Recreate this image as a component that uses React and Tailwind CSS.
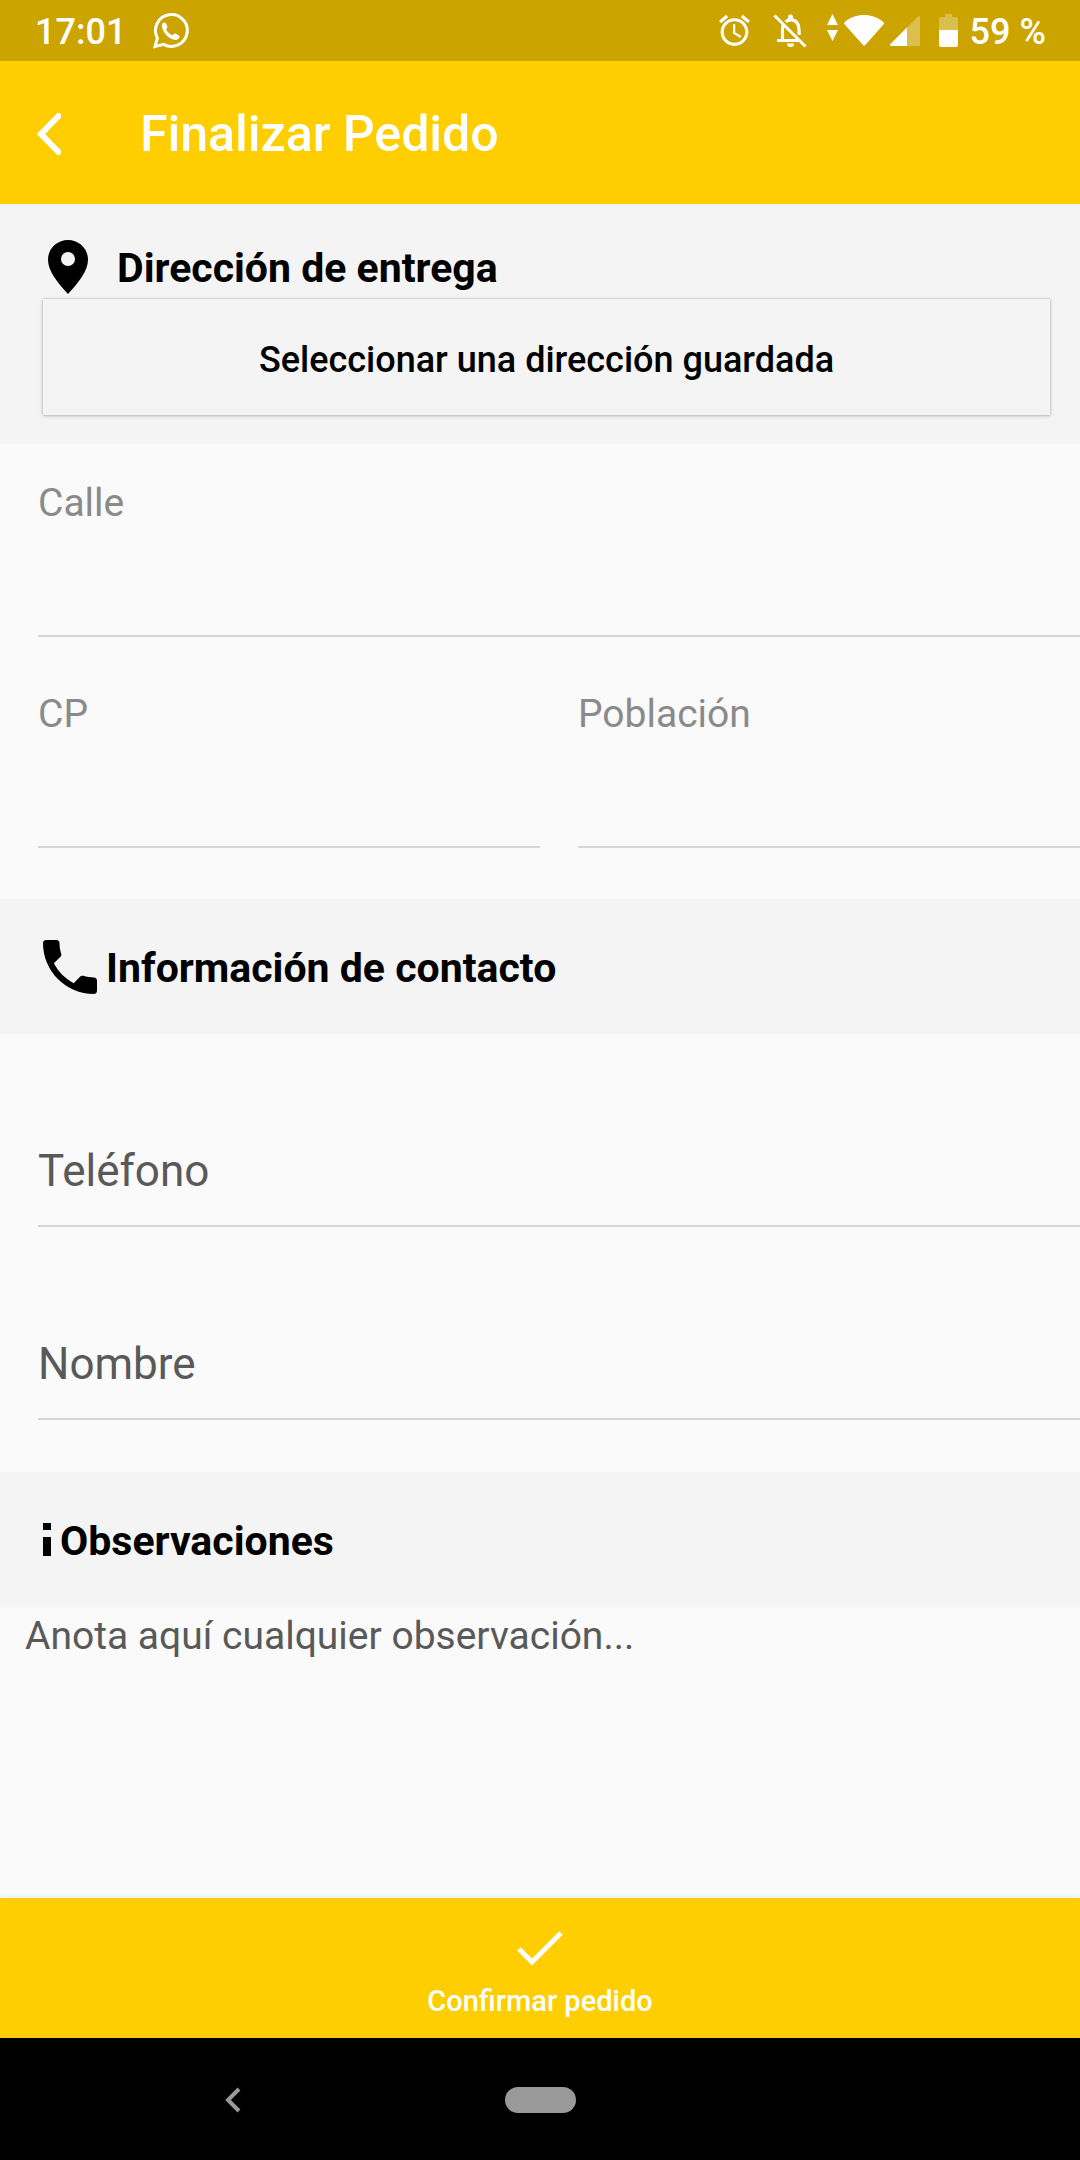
import React from "react";

function WhatsAppIcon() {
  return (
    <svg className="h-9 w-9" viewBox="0 0 36 36" fill="none" aria-hidden="true">
      <path d="M2 33.500l2.400-8.400A15.900 15.900 0 1 1 10.600 31.400z" stroke="#fff" strokeWidth="3" strokeLinejoin="miter" />
      <path d="M9 12c.3-1.800 1.700-2.500 2.800-2.400 1 .1 2.700 3.800 2.600 4.600-.1.900-1.400 1.700-1.200 2.400.7 2.100 3.800 4.900 6 5.600.9.200 1.700-1.700 2.600-1.600.8 0 4.400 1.900 4.700 2.600.5 1.600-2 3.800-4 3.800C16.500 27 8.200 18.500 9 12z" fill="#fff" />
    </svg>
  );
}

function AlarmIcon() {
  return (
    <svg className="h-[37px] w-[37px]" viewBox="0 0 24 24" fill="#fff" aria-hidden="true">
      <path d="M22 5.720l-4.600-3.860-1.290 1.530 4.600 3.860L22 5.720zM7.880 3.390L6.600 1.860 2 5.710l1.290 1.530 4.590-3.850zM12.500 8H11v6l4.750 2.850.75-1.230-4-2.370V8zM12 4c-4.970 0-9 4.030-9 9s4.020 9 9 9c4.970 0 9-4.030 9-9s-4.030-9-9-9zm0 16c-3.870 0-7-3.130-7-7s3.130-7 7-7 7 3.130 7 7-3.130 7-7 7z" />
    </svg>
  );
}

function BellOffIcon() {
  return (
    <svg className="h-[34px] w-[34px]" viewBox="0 0 34 34" fill="none" aria-hidden="true">
      <path d="M9.500 26.500V15a10 10 0 0 1 .8-3.500M12.500 7.800C16 4.800 22 5.200 24.500 9.500c1.700 2.500 1.700 6 1.700 11.500M4 26.500h22" stroke="#fff" strokeWidth="3.200" />
      <path d="M15 5V3a2.500 2.500 0 0 1 5 0v2zM14 29.500h7a3.500 3.500 0 0 1-7 0z" fill="#fff" />
      <path d="M1.500 1.500l31 31" stroke="#fff" strokeWidth="3" />
    </svg>
  );
}

function SignalIcons() {
  return (
    <svg className="h-[34px] w-[94px]" viewBox="0 0 94 34" fill="#fff" aria-hidden="true">
      <path d="M5.500 0L11 11H0zM5.500 27L11 16H0z" />
      <path d="M17.400 8.500C23 3 30 1 37 1s14 2 19.500 7.300c.8.700.8 1.300.2 2L38.300 31c-.8.900-1.500.9-2.300 0L17.500 10.300c-.5-.7-.6-1.200-.1-1.800z" />
      <path d="M93 3v28a1 1 0 0 1-1 1H64.500c-1.500 0-2-1-1-2L91 2.500c1-1 2-.8 2 .5z" opacity=".3" />
      <path d="M80 13.500V32H64.500c-1.500 0-2-1-1-2z" />
    </svg>
  );
}

function BatteryIcon() {
  return (
    <svg className="h-[33px] w-[19px]" viewBox="0 0 19 33" fill="#fff" aria-hidden="true">
      <path d="M0 16V5a2 2 0 0 1 2-2h4V0h7v3h4a2 2 0 0 1 2 2v11z" opacity=".3" />
      <path d="M0 16h19v15a2 2 0 0 1-2 2H2a2 2 0 0 1-2-2z" />
    </svg>
  );
}

function SectionTitle({ children }) {
  return <h2 className="pt-[3px] text-[41px] font-bold leading-[51px]">{children}</h2>;
}

function StackedField({ id, label }) {
  return (
    <div className="flex h-[211px] flex-1 flex-col border-b-2 border-[#d6d5db] pt-[53px]">
      <label htmlFor={id} className="text-[39px] leading-[48px] text-[#8a8a8a]">{label}</label>
      <input id={id} className="min-h-0 w-full flex-1 bg-transparent text-[39px] outline-none" />
    </div>
  );
}

function InlineField({ id, label }) {
  return (
    <div className="flex h-[193px] flex-col justify-end border-b-2 border-[#d6d5db]">
      <input
        id={id}
        aria-label={label}
        placeholder={label}
        className="h-[109px] w-full bg-transparent text-[44px] outline-none placeholder:text-[#595959]"
      />
    </div>
  );
}

export default function App() {
  return (
    <div className="flex min-h-screen flex-col bg-[#fafafa] font-['Roboto',sans-serif] text-black">
      <div className="flex h-[61px] items-center justify-between bg-[#cca400] pl-[35px] pr-[34px] text-[36px] font-medium text-white">
        <div className="flex items-center gap-[27px]">
          <span className="pt-[3px]">17:01</span>
          <WhatsAppIcon />
        </div>
        <div className="flex items-center">
          <AlarmIcon />
          <div className="mx-5"><BellOffIcon /></div>
          <SignalIcons />
          <div className="ml-[18px] mr-3"><BatteryIcon /></div>
          <span className="pt-[3px]">59 %</span>
        </div>
      </div>

      <header className="flex h-[143px] items-center bg-[#ffce00] pl-[37px] pt-[3px] text-white">
        <button type="button" aria-label="Volver" className="mr-[79px]">
          <svg className="h-[42px] w-6" viewBox="0 0 24 42" fill="none" aria-hidden="true">
            <path d="M21.500 3L4 21l17.500 18" stroke="#fff" strokeWidth="6" strokeLinecap="round" />
          </svg>
        </button>
        <h1 className="text-[50px] font-medium">Finalizar Pedido</h1>
      </header>

      <main className="flex flex-1 flex-col">
        <section className="bg-[#f4f4f4] pb-[29px] pl-[43px] pr-[30px] pt-9">
          <div className="flex items-center gap-[29px] pl-[5px]">
            <svg className="h-[54px] w-10" viewBox="0 0 40 54" aria-hidden="true">
              <path fillRule="evenodd" d="M20 0C9 0 0 8.600 0 19.500 0 31 9 42 20 54c11-12 20-23 20-34.500C40 8.600 31 0 20 0zm0 12a7 7 0 1 1 0 14 7 7 0 0 1 0-14z" />
            </svg>
            <SectionTitle>Dirección de entrega</SectionTitle>
          </div>
          <button type="button" className="mt-[5px] block h-[116px] w-full bg-[#f4f4f4] pt-[5px] text-[36px] font-medium shadow-[0_0_2px_rgba(0,0,0,0.25),0_1px_4px_rgba(0,0,0,0.18)]">
            Seleccionar una dirección guardada
          </button>
        </section>

        <section className="pb-[51px] pl-[38px]">
          <div className="-mt-[18px] flex"><StackedField id="calle" label="Calle" /></div>
          <div className="flex gap-[38px]">
            <StackedField id="cp" label="CP" />
            <StackedField id="poblacion" label="Población" />
          </div>
        </section>

        <section className="flex h-[135px] items-center gap-[9px] bg-[#f4f4f4] pl-[43px]">
          <svg className="h-[54px] w-[54px]" viewBox="3 3 18 18" aria-hidden="true">
            <path d="M6.620 10.790c1.440 2.830 3.760 5.140 6.590 6.590l2.200-2.200c.27-.27.67-.36 1.020-.24 1.120.37 2.330.57 3.570.57.55 0 1 .45 1 1V20c0 .55-.45 1-1 1-9.390 0-17-7.610-17-17 0-.55.45-1 1-1h3.500c.55 0 1 .45 1 1 0 1.250.2 2.450.57 3.570.11.35.03.74-.25 1.020l-2.200 2.200z" />
          </svg>
          <SectionTitle>Información de contacto</SectionTitle>
        </section>

        <section className="pb-[52px] pl-[38px]">
          <InlineField id="telefono" label="Teléfono" />
          <InlineField id="nombre" label="Nombre" />
        </section>

        <section className="flex h-[135px] items-center gap-[9px] bg-[#f4f4f4] pl-[43px]">
          <svg className="h-[33px] w-2" viewBox="0 0 8 33" aria-hidden="true">
            <path d="M0 0h8v7H0zM0 14h8v19H0z" />
          </svg>
          <SectionTitle>Observaciones</SectionTitle>
        </section>

        <textarea
          aria-label="Observaciones"
          placeholder="Anota aquí cualquier observación..."
          className="w-full flex-1 resize-none bg-transparent px-[25px] py-[5px] text-[39px] leading-[48px] outline-none placeholder:text-[#595959]"
        />
      </main>

      <footer className="h-[140px] bg-[#ffce00] shadow-[0_0_6px_rgba(0,0,0,0.08)]">
        <button type="button" className="flex h-full w-full flex-col items-center pt-8 text-[29px] font-medium leading-9 text-white">
          <svg className="mb-[17px] h-[36px] w-[48px]" viewBox="0 0 48 36" fill="none" aria-hidden="true">
            <path d="M3 19l13 13L45 3" stroke="#fff" strokeWidth="5" />
          </svg>
          Confirmar pedido
        </button>
      </footer>

      <nav className="grid h-[122px] grid-cols-[1fr_auto_1fr] items-center bg-black pt-[2px]">
        <button type="button" aria-label="Atrás" className="ml-[225px] w-4">
          <svg className="h-[26px] w-4" viewBox="0 0 16 26" fill="none" aria-hidden="true">
            <path d="M14 2L3 13l11 11" stroke="#999" strokeWidth="4" />
          </svg>
        </button>
        <button type="button" aria-label="Inicio" className="h-[26px] w-[71px] rounded-full bg-[#999999]" />
      </nav>
    </div>
  );
}
